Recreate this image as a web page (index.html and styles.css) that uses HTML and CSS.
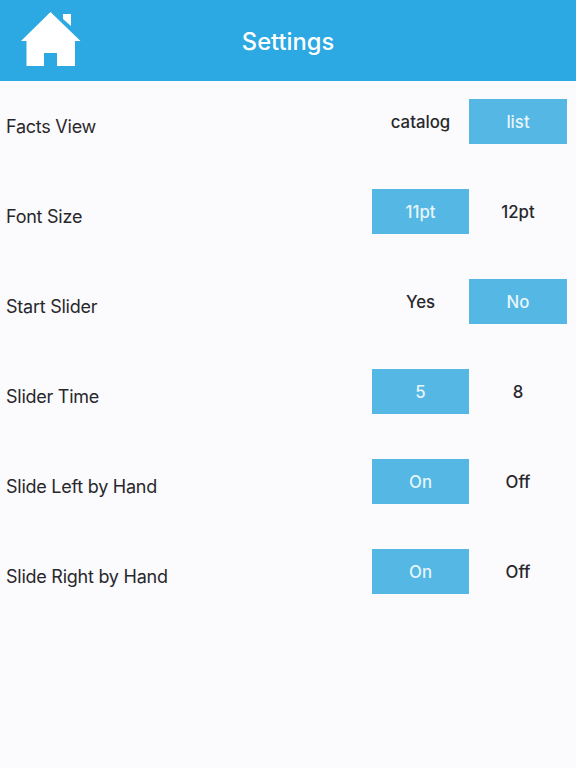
FILE: index.html
```html
<!DOCTYPE html>
<html lang="en">
<head>
<meta charset="utf-8">
<title>Settings</title>
<link rel="stylesheet" href="styles.css">
</head>
<body>
<header class="header">
  <svg class="home" viewBox="0 0 60 54" width="60" height="54" aria-hidden="true">
    <path fill="#fff" d="M29.500 0 L59.500 29 L54 29 L54 54 L36 54 L36 41 L23 41 L23 54 L5.500 54 L5.500 29 L0 29 Z"/>
    <path fill="#fff" d="M42 2 L50 2 L50 14 L42 7 Z"/>
  </svg>
  <h1 class="title">Settings</h1>
</header>
<main class="list">
  <div class="row"><span class="label">Facts View</span><div class="seg"><span class="opt">catalog</span><span class="opt on">list</span></div></div>
  <div class="row"><span class="label">Font Size</span><div class="seg"><span class="opt on">11pt</span><span class="opt">12pt</span></div></div>
  <div class="row"><span class="label">Start Slider</span><div class="seg"><span class="opt">Yes</span><span class="opt on">No</span></div></div>
  <div class="row"><span class="label">Slider Time</span><div class="seg"><span class="opt on">5</span><span class="opt">8</span></div></div>
  <div class="row"><span class="label">Slide Left by Hand</span><div class="seg"><span class="opt on">On</span><span class="opt">Off</span></div></div>
  <div class="row"><span class="label">Slide Right by Hand</span><div class="seg"><span class="opt on">On</span><span class="opt">Off</span></div></div>
</main>
</body>
</html>
```
FILE: styles.css
```css
* { box-sizing: border-box; }
html, body { margin: 0; height: 100%; }
body {
  background: #fbfafc;
  color: #28282c;
  font-family: Inter, "Liberation Sans", sans-serif;
  overflow: hidden;
}
.header {
  height: 81px;
  background: #2ca8e2;
  display: flex;
  align-items: center;
  justify-content: center;
  position: relative;
}
.home { position: absolute; left: 21px; top: 12px; }
.title {
  margin: 0;
  padding-top: 1px;
  font-size: 23.700px;
  font-weight: 550;
  color: #fff;
}
.list {
  display: flex;
  flex-direction: column;
  gap: 45px;
  padding: 18px 9px 0 6px;
}
.row {
  height: 45px;
  display: flex;
  align-items: center;
  justify-content: space-between;
}
.label { font-size: 18px; font-weight: 400; padding-top: 10px; letter-spacing: -0.25px; }
.seg { display: flex; }
.opt {
  width: 98px;
  height: 45px;
  display: flex;
  align-items: center;
  justify-content: center;
  font-size: 16.800px;
  font-weight: 550;
}
.opt:first-child { width: 97px; }
.on { background: #54b7e4; color: #e6f5fb; }
```
